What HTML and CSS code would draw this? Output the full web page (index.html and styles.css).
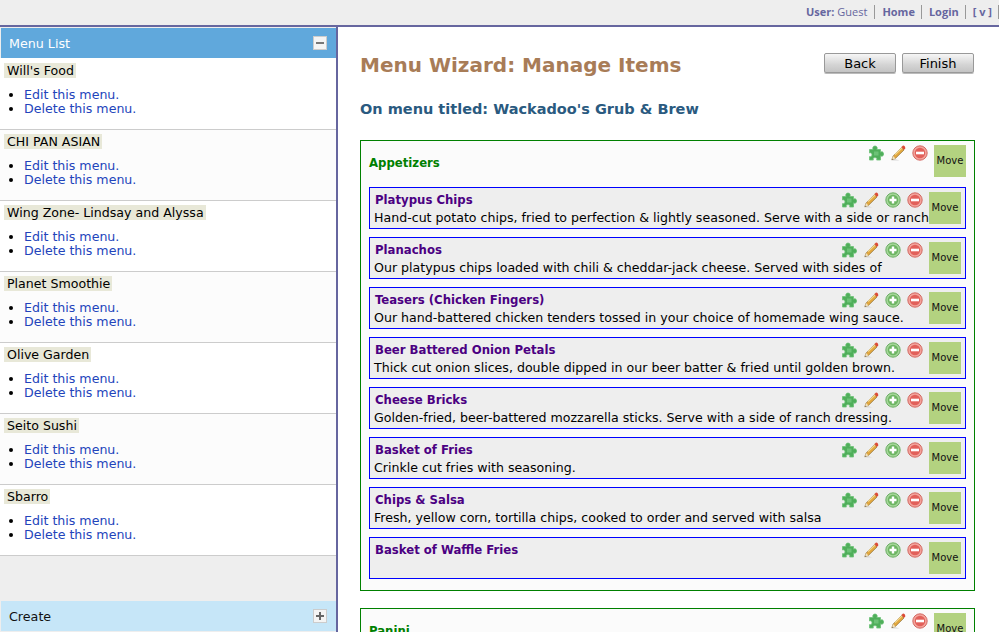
FILE: index.html
```html
<!DOCTYPE html>
<html lang="en">
<head>
<meta charset="utf-8">
<title>Menu Wizard: Manage Items</title>
<link rel="stylesheet" href="styles.css">
</head>
<body>
<svg class="defs" width="0" height="0" aria-hidden="true">
  <defs>
    <symbol id="i-puzzle" viewBox="0 0 16 16">
      <path d="M1.5 4.5 H5.2 C4.4 3.6 4.6 1 7 1 C9.4 1 9.6 3.6 8.8 4.5 H12.5 V7.2 C13.4 6.4 15.6 6.6 15.6 9 C15.6 11.4 13.4 11.6 12.5 10.8 V15 H8.6 C9.2 14 8.8 12.6 7 12.6 C5.2 12.6 4.8 14 5.4 15 H1.5 V11.6 C2.6 12.2 4 11.4 4 9.8 C4 8.2 2.6 7.4 1.5 8 Z" fill="#4fae5a" stroke="#6cc276" stroke-width=".8"/>
      <path d="M6 6.5 H10.5 V10.5 H6 Z" fill="#6cc276"/>
    </symbol>
    <symbol id="i-pencil" viewBox="0 0 16 16">
      <path d="M1.5 15.4 H9.5 L5 14 Z" fill="#d8d8d8"/>
      <path d="M11.6 2.6 L14 5 L5.4 13.4 L1.8 14.8 L3.1 11 Z" fill="#e3a83f" stroke="#8f7440" stroke-width=".7"/>
      <path d="M5 9.6 L12.4 2.6" stroke="#f5dc94" stroke-width="1.2"/>
      <path d="M11.4 2 L12.8 .7 C13.8 .2 15.6 1.8 15.2 3.2 L14 5 Z" fill="#dc4a36"/>
      <path d="M3.1 11 L5.4 13.4 L1.8 14.8 Z" fill="#f3e2bd"/>
      <path d="M2.5 13.6 L1.8 14.8 L3.1 14.3 Z" fill="#444"/>
    </symbol>
    <symbol id="i-plus" viewBox="0 0 16 16">
      <circle cx="8" cy="8" r="7.2" fill="#a5d69a" stroke="#62a85a" stroke-width=".9"/>
      <circle cx="8" cy="8" r="5.2" fill="#6db562"/>
      <path d="M6.8 4.5 H9.2 V6.8 H11.5 V9.2 H9.2 V11.5 H6.8 V9.2 H4.5 V6.8 H6.8 Z" fill="#fff"/>
    </symbol>
    <symbol id="i-minus" viewBox="0 0 16 16">
      <circle cx="8" cy="8" r="7.2" fill="#f3a49c" stroke="#cf5f58" stroke-width=".9"/>
      <circle cx="8" cy="8" r="5.2" fill="#e2605a"/>
      <rect x="4" y="6.7" width="8" height="2.6" fill="#fff"/>
    </symbol>
  </defs>
</svg>

<header class="topbar">
  <span class="topbar-item"><b>User:</b> Guest</span>
  <a class="topbar-item topbar-link">Home</a>
  <a class="topbar-item topbar-link">Login</a>
  <a class="topbar-item topbar-link">[ v ]</a>
</header>

<div class="layout">
  <aside class="sidebar">
    <div class="panel-head panel-head-active">
      <span>Menu List</span>
      <span class="toggle"><span class="toggle-h toggle-dark"></span></span>
    </div>
    <ul class="menus">
      <li class="menu-row"><span class="menu-name">Will's Food</span>
        <ul class="menu-actions"><li><a>Edit this menu.</a></li><li><a>Delete this menu.</a></li></ul></li>
      <li class="menu-row menu-row-alt"><span class="menu-name">CHI PAN ASIAN</span>
        <ul class="menu-actions"><li><a>Edit this menu.</a></li><li><a>Delete this menu.</a></li></ul></li>
      <li class="menu-row"><span class="menu-name">Wing Zone- Lindsay and Alyssa</span>
        <ul class="menu-actions"><li><a>Edit this menu.</a></li><li><a>Delete this menu.</a></li></ul></li>
      <li class="menu-row menu-row-alt"><span class="menu-name">Planet Smoothie</span>
        <ul class="menu-actions"><li><a>Edit this menu.</a></li><li><a>Delete this menu.</a></li></ul></li>
      <li class="menu-row"><span class="menu-name">Olive Garden</span>
        <ul class="menu-actions"><li><a>Edit this menu.</a></li><li><a>Delete this menu.</a></li></ul></li>
      <li class="menu-row menu-row-alt"><span class="menu-name">Seito Sushi</span>
        <ul class="menu-actions"><li><a>Edit this menu.</a></li><li><a>Delete this menu.</a></li></ul></li>
      <li class="menu-row"><span class="menu-name">Sbarro</span>
        <ul class="menu-actions"><li><a>Edit this menu.</a></li><li><a>Delete this menu.</a></li></ul></li>
    </ul>
    <div class="panel-head panel-head-idle">
      <span>Create</span>
      <span class="toggle"><span class="toggle-h"></span><span class="toggle-v"></span></span>
    </div>
  </aside>

  <main class="content">
    <div class="title-row">
      <h1 class="title">Menu Wizard: Manage Items</h1>
      <div class="buttons"><button class="btn">Back</button><button class="btn">Finish</button></div>
    </div>
    <h2 class="subtitle">On menu titled: Wackadoo's Grub &amp; Brew</h2>

    <section class="category">
      <div class="cat-head">
        <span class="cat-name">Appetizers</span>
        <div class="cat-icons">
          <svg class="ico"><use href="#i-puzzle"/></svg>
          <svg class="ico"><use href="#i-pencil"/></svg>
          <svg class="ico"><use href="#i-minus"/></svg>
        </div>
        <div class="move">Move</div>
      </div>

      <article class="item">
        <div class="item-main">
          <div class="item-top"><span class="item-name">Platypus Chips</span><div class="item-icons"><svg class="ico"><use href="#i-puzzle"/></svg><svg class="ico"><use href="#i-pencil"/></svg><svg class="ico"><use href="#i-plus"/></svg><svg class="ico"><use href="#i-minus"/></svg></div></div>
          <p class="item-desc">Hand-cut potato chips, fried to perfection &amp; lightly seasoned. Serve with a side or ranch</p>
        </div>
        <div class="move">Move</div>
      </article>
      <article class="item">
        <div class="item-main">
          <div class="item-top"><span class="item-name">Planachos</span><div class="item-icons"><svg class="ico"><use href="#i-puzzle"/></svg><svg class="ico"><use href="#i-pencil"/></svg><svg class="ico"><use href="#i-plus"/></svg><svg class="ico"><use href="#i-minus"/></svg></div></div>
          <p class="item-desc">Our platypus chips loaded with chili &amp; cheddar-jack cheese. Served with sides of</p>
        </div>
        <div class="move">Move</div>
      </article>
      <article class="item">
        <div class="item-main">
          <div class="item-top"><span class="item-name">Teasers (Chicken Fingers)</span><div class="item-icons"><svg class="ico"><use href="#i-puzzle"/></svg><svg class="ico"><use href="#i-pencil"/></svg><svg class="ico"><use href="#i-plus"/></svg><svg class="ico"><use href="#i-minus"/></svg></div></div>
          <p class="item-desc">Our hand-battered chicken tenders tossed in your choice of homemade wing sauce.</p>
        </div>
        <div class="move">Move</div>
      </article>
      <article class="item">
        <div class="item-main">
          <div class="item-top"><span class="item-name">Beer Battered Onion Petals</span><div class="item-icons"><svg class="ico"><use href="#i-puzzle"/></svg><svg class="ico"><use href="#i-pencil"/></svg><svg class="ico"><use href="#i-plus"/></svg><svg class="ico"><use href="#i-minus"/></svg></div></div>
          <p class="item-desc">Thick cut onion slices, double dipped in our beer batter &amp; fried until golden brown.</p>
        </div>
        <div class="move">Move</div>
      </article>
      <article class="item">
        <div class="item-main">
          <div class="item-top"><span class="item-name">Cheese Bricks</span><div class="item-icons"><svg class="ico"><use href="#i-puzzle"/></svg><svg class="ico"><use href="#i-pencil"/></svg><svg class="ico"><use href="#i-plus"/></svg><svg class="ico"><use href="#i-minus"/></svg></div></div>
          <p class="item-desc">Golden-fried, beer-battered mozzarella sticks. Serve with a side of ranch dressing.</p>
        </div>
        <div class="move">Move</div>
      </article>
      <article class="item">
        <div class="item-main">
          <div class="item-top"><span class="item-name">Basket of Fries</span><div class="item-icons"><svg class="ico"><use href="#i-puzzle"/></svg><svg class="ico"><use href="#i-pencil"/></svg><svg class="ico"><use href="#i-plus"/></svg><svg class="ico"><use href="#i-minus"/></svg></div></div>
          <p class="item-desc">Crinkle cut fries with seasoning.</p>
        </div>
        <div class="move">Move</div>
      </article>
      <article class="item">
        <div class="item-main">
          <div class="item-top"><span class="item-name">Chips &amp; Salsa</span><div class="item-icons"><svg class="ico"><use href="#i-puzzle"/></svg><svg class="ico"><use href="#i-pencil"/></svg><svg class="ico"><use href="#i-plus"/></svg><svg class="ico"><use href="#i-minus"/></svg></div></div>
          <p class="item-desc">Fresh, yellow corn, tortilla chips, cooked to order and served with salsa</p>
        </div>
        <div class="move">Move</div>
      </article>
      <article class="item">
        <div class="item-main">
          <div class="item-top"><span class="item-name">Basket of Waffle Fries</span><div class="item-icons"><svg class="ico"><use href="#i-puzzle"/></svg><svg class="ico"><use href="#i-pencil"/></svg><svg class="ico"><use href="#i-plus"/></svg><svg class="ico"><use href="#i-minus"/></svg></div></div>
          <p class="item-desc"></p>
        </div>
        <div class="move">Move</div>
      </article>
    </section>

    <section class="category">
      <div class="cat-head">
        <span class="cat-name">Panini</span>
        <div class="cat-icons">
          <svg class="ico"><use href="#i-puzzle"/></svg>
          <svg class="ico"><use href="#i-pencil"/></svg>
          <svg class="ico"><use href="#i-minus"/></svg>
        </div>
        <div class="move">Move</div>
      </div>
    </section>
  </main>
</div>
</body>
</html>
```
FILE: styles.css
```css
* { box-sizing: border-box; }
html, body { margin: 0; height: 632px; overflow: hidden; background: #fff; }
body { font-family: "DejaVu Sans", Verdana, sans-serif; font-size: 12.6px; color: #000; display: flex; flex-direction: column; }
.defs { position: absolute; }

.topbar { height: 27px; flex: none; background: #eee; border-bottom: 2px solid #66669f; display: flex; justify-content: flex-end; align-items: center; padding: 0 0 1px 0; font-family: "Open Sans", "DejaVu Sans", sans-serif; font-size: 11px; color: #66669f; }
.topbar-item { padding: 0 6px 0 7px; border-right: 1px solid #999; line-height: 14px; }
.topbar-item:first-child { padding-right: 7px; }
.topbar-link { font-weight: bold; }
.topbar-item b { font-weight: bold; }

.layout { flex: 1; display: flex; min-height: 0; }

.sidebar { width: 338px; flex: none; background: #eee; border-right: 2px solid #66669f; display: flex; flex-direction: column; height: 605px; }
.panel-head { flex: none; margin: 1px 0 0 1px; width: 335px; height: 30px; padding: 0 9px 0 8px; display: flex; align-items: center; justify-content: space-between; font-size: 12.7px; }
.panel-head-active { background: #60a8dc; color: #fff; }
.panel-head-idle { background: #c6e6f8; color: #111; margin-top: auto; margin-bottom: 1px; }
.toggle { position: relative; width: 14px; height: 14px; background: #f4f4f4; border: 1px solid #ccc; display: block; }
.toggle-h { position: absolute; left: 2px; top: 5px; width: 8px; height: 2px; background: #666; }
.toggle-dark { background: #777; }
.toggle-v { position: absolute; left: 5px; top: 2px; width: 2px; height: 8px; background: #666; }

.menus { list-style: none; margin: 1px 0 0; padding: 0; flex: none; }
.menu-row { height: 71px; padding: 4px 0 0 4px; background: #fff; border-bottom: 1px solid #ccc; }
.menu-row:first-child { box-shadow: 0 -1px 0 #fff; }
.menu-row-alt { background: #fcfcfc; }
.menu-name { display: inline-block; background: #e8e8d8; padding: 0 2px 0 3px; line-height: 15px; height: 15px; }
.menu-actions { margin: 10px 0 0; padding: 0 0 0 20px; line-height: 14px; list-style-type: disc; }
.menu-actions a { color: #2244bb; }

.content { flex: 1; min-width: 0; padding: 0 24px 0 22px; background: #fff; overflow: hidden; }
.title-row { display: flex; justify-content: space-between; align-items: flex-start; height: 74px; padding: 26px 1px 0 0; }
.title { margin: 0; font-size: 20px; line-height: 24px; font-weight: bold; color: #a87c57; }
.buttons { display: flex; gap: 6px; }
.btn { width: 72px; height: 20px; padding: 0; font: 13px "DejaVu Sans", Verdana, sans-serif; color: #000; background: linear-gradient(#f6f6f6, #d4d4d4 60%, #c4c4c4); border: 1px solid #999; border-radius: 2px; box-shadow: 0 1px 0 #bbb; }
.subtitle { margin: -1px 0 22px; font-size: 14.5px; line-height: 18px; height: 18px; font-weight: bold; color: #2a5a80; }

.category { width: 615px; border: 1px solid #008000; background: #fbfbfb; padding: 4px 8px 11px; margin-bottom: 17px; }
.cat-head { display: flex; height: 32px; margin-bottom: 10px; }
.cat-name { font-family: "DejaVu Sans Condensed", "DejaVu Sans", sans-serif; font-stretch: condensed; font-weight: bold; color: #008000; font-size: 13px; line-height: 14px; flex: 1; padding-top: 11px; }
.cat-icons { display: flex; gap: 6px; margin-right: 6px; }
.ico { width: 16px; height: 16px; display: block; }

.item { display: flex; height: 42px; background: #eee; border: 1px solid #0000ff; padding: 4px; gap: 3px; margin-bottom: 8px; }
.item:last-child { margin-bottom: 0; }
.item-main { flex: 1; min-width: 0; }
.item-top { display: flex; justify-content: space-between; height: 18px; }
.item-name { font-family: "DejaVu Sans Condensed", "DejaVu Sans", sans-serif; font-stretch: condensed; color: #4b0082; font-weight: bold; font-size: 13px; line-height: 15px; padding-left: 1px; }
.item-icons { display: flex; gap: 6px; margin-right: 3px; }
.item-desc { margin: 0; line-height: 16px; white-space: nowrap; }
.move { width: 32px; height: 32px; flex: none; background: #b3d280; font-size: 10px; line-height: 32px; text-align: center; color: #111; }
```
